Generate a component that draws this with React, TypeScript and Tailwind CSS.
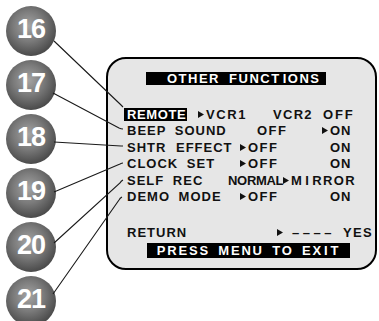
import React from "react";

const Arrow = () => (
  <svg width="6" height="7" viewBox="0 0 6 7" className="inline-block mr-[2px] shrink-0">
    <polygon points="0,0 6,3.5 0,7" fill="#111" />
  </svg>
);

const Ball = ({ n }: { n: string }) => (
  <div className="w-[50px] h-[50px] rounded-full shrink-0 flex items-center justify-center bg-[radial-gradient(circle_at_45%_40%,#a4a4a4_0%,#7a7a7a_38%,#4a4a4a_74%,#2a2a2a_100%)]">
    <span className="text-white font-bold text-[27px] leading-none tracking-[-1px] mb-[3px] font-['Liberation_Sans',Arial,sans-serif]">
      {n}
    </span>
  </div>
);

export default function App() {
  return (
    <div className="relative w-[379px] h-[321px] bg-white overflow-hidden flex font-['Liberation_Sans',Arial,sans-serif]">
      <div className="w-[106px] shrink-0 flex flex-col gap-[4px] pl-[6px] pt-[6px]">
        <Ball n="16" />
        <Ball n="17" />
        <Ball n="18" />
        <Ball n="19" />
        <Ball n="20" />
        <Ball n="21" />
      </div>

      <div className="mt-[57px] w-[271px] h-[213px] border-2 border-black rounded-[20px] bg-[#e6e6e6] flex flex-col text-[13px] font-bold tracking-[1px] [word-spacing:4px] text-[#111] leading-none">
        <div className="mt-[13px] ml-[38px] w-[180px] h-[13px] bg-black text-white flex items-center justify-start pl-[21px] tracking-[1.5px]">
          OTHER FUNCT<span className="ml-[2px]">I</span>ONS
        </div>

        <div className="mt-[21px] pl-[16px] flex flex-col">
          <div className="h-[16.5px] flex items-center">
            <div className="w-[74px] shrink-0 flex items-center">
              <span className="inline-flex items-center h-[13px] bg-black text-white pl-[3px] pr-[1px] tracking-[0.6px]">REMOTE</span>
            </div>
            <div className="w-[75px] shrink-0 flex items-center tracking-[1.6px]"><Arrow />VCR1</div>
            <div className="w-[50px] shrink-0 tracking-[1.3px]">VCR2</div>
            <div className="tracking-[1.8px]">OFF</div>
          </div>
          <div className="h-[16.5px] flex items-center">
            <div className="w-[133px] shrink-0 pl-[3px]">BEEP SOUND</div>
            <div className="w-[65px] shrink-0 tracking-[1.5px]">OFF</div>
            <div className="flex items-center"><Arrow />ON</div>
          </div>
          <div className="h-[16.5px] flex items-center">
            <div className="w-[116px] shrink-0 pl-[3px] [word-spacing:5px]">SHTR EFFECT</div>
            <div className="w-[90px] shrink-0 flex items-center tracking-[1.5px]"><Arrow />OFF</div>
            <div>ON</div>
          </div>
          <div className="h-[16.5px] flex items-center">
            <div className="w-[116px] shrink-0 pl-[3px]">CLOCK SET</div>
            <div className="w-[90px] shrink-0 flex items-center tracking-[1.5px]"><Arrow />OFF</div>
            <div>ON</div>
          </div>
          <div className="h-[16.5px] flex items-center">
            <div className="w-[104px] shrink-0 pl-[3px]">SELF REC</div>
            <div className="w-[55px] shrink-0 tracking-[-0.3px]">NORMAL</div>
            <div className="flex items-center tracking-[1.4px]"><Arrow />M<span className="mx-[2px]">I</span>RROR</div>
          </div>
          <div className="h-[16.5px] flex items-center">
            <div className="w-[116px] shrink-0 pl-[3px]">DEMO MODE</div>
            <div className="w-[90px] shrink-0 flex items-center tracking-[1.5px]"><Arrow />OFF</div>
            <div>ON</div>
          </div>
        </div>

        <div className="mt-[19px] pl-[16px] h-[16px] flex items-center">
          <div className="w-[153px] shrink-0 pl-[3px]">RETURN</div>
          <div className="w-[15px] shrink-0 flex items-center"><Arrow /></div>
          <div className="w-[51px] shrink-0 tracking-[3.5px]">––––</div>
          <div className="tracking-[1.3px]">YES</div>
        </div>

        <div className="mt-[3px] ml-[39px] w-[203px] h-[15px] bg-black text-white flex items-center justify-center tracking-[1.8px] [word-spacing:3px]">
          PRESS MENU TO EX<span className="mx-[1px]">I</span>T
        </div>
      </div>

      <svg className="absolute inset-0 pointer-events-none" width="379" height="321" viewBox="0 0 379 321">
        <g stroke="#1a1a1a" strokeWidth="1.1" fill="none">
          <path d="M54 41 L120 104 Q122 106 123 107" />
          <path d="M53 93 L119 128 Q121 129 123 129" />
          <path d="M54 142 L121 146 L123 146" />
          <path d="M54 192 L120 164 Q122 163 123 163" />
          <path d="M54 243 L120 183 Q121 181 123 180" />
          <path d="M53 294 L119 200 Q120 198 122 197" />
        </g>
      </svg>
    </div>
  );
}
